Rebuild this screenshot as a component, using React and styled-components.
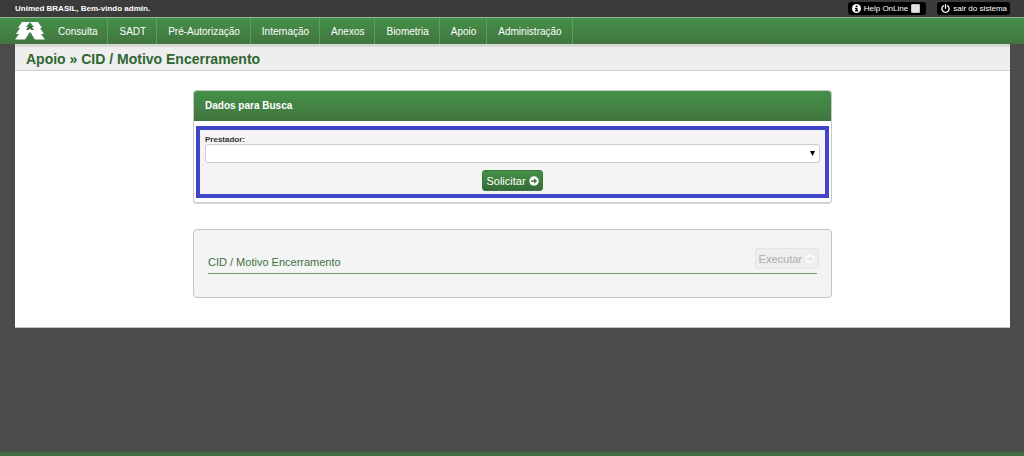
import React, { useState } from 'react'
import styled, { createGlobalStyle } from 'styled-components'


const GlobalStyle = createGlobalStyle`
        * {
            box-sizing: border-box;
        }

        body {
            margin: 0;
            background-color: #4b4b4b;
            font-family: Arial, 'Liberation Sans', sans-serif;
        }

        button, select, input {
            font-family: inherit;
            margin: 0;
        }
    `

const Layout = styled.div`
        display: flex;
        flex-direction: column;
        min-height: 100vh;
    `

const TopBar = styled.header`
        display: flex;
        align-items: center;
        justify-content: space-between;
        height: 17px;
        padding: 0 14px 0 15px;
        background-color: #3b3b3b;
        color: white;
        font-size: 8px;
    `

const Actions = styled.div`
        display: flex;
        gap: 11px;
    `

const Pill = styled.span`
        display: flex;
        align-items: center;
        gap: 3px;
        height: 13px;
        padding: 0 ${props => props.$end} 0 4px;
        border: 0;
        border-radius: 3px;
        background-color: black;
        color: white;
        font-size: 8px;
        line-height: 13px;
        text-decoration: none;
        cursor: pointer;
    `

const CheckBox = styled.input`
        appearance: none;
        width: 9px;
        height: 9px;
        border: 1px solid #c4c4c4;
        border-radius: 1px;
        background-color: ${props => props.checked ? '#3f8143' : '#e2e2e2'};
    `

const Nav = styled.nav`
        display: flex;
        height: 27px;
        padding-left: 15px;
        border-top: 1px solid #93b995;
        background: linear-gradient(#459049, #41753f);
    `

const Home = styled.a`
        display: flex;
        align-items: center;
        width: 32px;
    `

const NavList = styled.ul`
        display: flex;
        margin: 0;
        padding: 0;
        list-style-type: none;
    `

const NavItem = styled.li`
        display: flex;
        border-right: 1px solid #5f9a61;

        a {
            padding: 2px 10px 0 11px;
            color: white;
            font-size: 10px;
            line-height: 24px;
            text-decoration: none;
        }
    `

const Page = styled.main`
        margin: 0 14px 0 15px;
        padding-bottom: 29px;
        border-bottom: 1px solid #c4c4c4;
        background-color: white;
    `

const Title = styled.h1`
        height: 27px;
        margin: 0 0 19px;
        padding-left: 11px;
        border-top: 3px solid #d6d6d6;
        border-bottom: 1px solid #cfcfcf;
        background-color: #eeeeee;
        color: #2f6632;
        font-size: 14px;
        line-height: 24px;
    `

const Card = styled.section`
        max-width: 639px;
        margin: 0 auto;
        border: 1px solid #c8c8c8;
        border-bottom: 2px solid #d0d0cc;
        border-radius: 4px;
        overflow: hidden;
    `

const CardTitle = styled.h2`
        margin: 0;
        padding-left: 11px;
        background: linear-gradient(#459049, #41753f);
        color: white;
        font-size: 10px;
        line-height: 30px;
    `

const SearchForm = styled.form`
        margin: 5px 2px 4px;
        padding: 5px 5px 3px;
        border: 4px solid #4146c9;
        background-color: #f4f4f4;
        text-align: center;
    `

const Label = styled.label`
        display: block;
        color: #333333;
        font-size: 8px;
        font-weight: bold;
        line-height: 9px;
        text-align: left;
    `

const SelectBox = styled.div`
        position: relative;
        margin-bottom: 7px;

        svg {
            position: absolute;
            top: 7px;
            right: 5px;
            pointer-events: none;
        }
    `

const Select = styled.select`
        appearance: none;
        display: block;
        width: 100%;
        height: 19px;
        padding: 0 14px 0 4px;
        border: 1px solid #cccccc;
        border-radius: 3px;
        background-color: white;
        font-size: 10px;
    `

const Button = styled.button`
        display: inline-flex;
        align-items: center;
        gap: 3px;
        height: 21px;
        padding: 0 3px;
        border: 1px solid #3a7a3d;
        border-radius: 3px;
        background: linear-gradient(#459049, #356b36);
        color: white;
        font-size: 11px;
        vertical-align: top;

        &:disabled {
            border-color: #e4e4e4;
            background: #eeeeee;
            color: #adadad;
        }
    `

const ReportCard = styled.section`
        display: flex;
        max-width: 639px;
        margin: 25px auto 0;
        padding: 18px 14px 23px;
        border: 1px solid #c4c4c4;
        border-radius: 4px;
        background-color: #f4f4f4;
    `

const Report = styled.div`
        display: flex;
        flex: 1;
        justify-content: space-between;
        padding-bottom: 4px;
        border-bottom: 1px solid #6ba06e;

        h3 {
            margin: 0;
            padding-top: 7px;
            color: #3f7042;
            font-size: 11px;
            font-weight: normal;
            line-height: 14px;
        }

        button {
            margin-right: -2px;
        }
    `

const Footer = styled.footer`
        height: 5px;
        margin-top: auto;
        border-top: 1px solid #47584a;
        background-color: #3f6a42;
    `

const Logo = () => (
    <svg width='30' height='18' viewBox='0 0 30 18' aria-hidden='true'>
        <path d='M7 0h16l4 6h-2l4 6h-3l4 5.500h-10L15 10l-5 7.500H0L4 12H1l4-6H3z' fill='white' />
        <path d='M15 0l4 5h-2l2 3h-8l2-3h-2z' fill='#438847' />
        <path d='M15 3l3 4.500h-6z' fill='#2f6332' />
        <path d='M15 6l3 5h-6z' fill='white' />
        <path d='M15 10l2 3h-4z' fill='#3f7c42' />
    </svg>
)

const InfoIcon = () => (
    <svg width='9' height='9' viewBox='0 0 18 18' aria-hidden='true'>
        <circle cx='9' cy='9' r='9' fill='white' />
        <path d='M7.500 3h3.500v3H7.500zM6 7.500h5v5h1.500v2.500H6v-2.500h1.500V10H6z' fill='black' />
    </svg>
)

const PowerIcon = () => (
    <svg width='9' height='9' viewBox='0 0 18 18' fill='none' stroke='white' strokeWidth='2.600' strokeLinecap='round' aria-hidden='true'>
        <path d='M5 3.500a7.200 7.200 0 1 0 8 0M9 1.500v7' />
    </svg>
)

const ArrowIcon = ({ color, arrow }) => (
    <svg width='10' height='10' viewBox='0 0 20 20' aria-hidden='true'>
        <circle cx='10' cy='10' r='9.500' fill={color} />
        <path d='M4 8.500h6V4.500l6.500 5.500L10 15.500v-4H4z' fill={arrow} />
    </svg>
)

const menu = ['Consulta', 'SADT', 'Pré-Autorização', 'Internação', 'Anexos', 'Biometria', 'Apoio', 'Administração']

const App = () => {
    const [help, setHelp] = useState(false)

    return (
        <Layout>
            <GlobalStyle />
            <TopBar>
                <strong>Unimed BRASIL, Bem-vindo admin.</strong>
                <Actions>
                    <Pill as='label' $end='6px'>
                        <InfoIcon />
                        Help OnLine
                        <CheckBox type='checkbox' checked={help} onChange={() => setHelp(!help)} />
                    </Pill>
                    <Pill as='a' href='#sair' $end='3px'>
                        <PowerIcon />
                        sair do sistema
                    </Pill>
                </Actions>
            </TopBar>
            <Nav>
                <Home href='#inicio'><Logo /></Home>
                <NavList>
                    {
                        menu.map(item => (
                            <NavItem key={item}>
                                <a href='#menu'>{item}</a>
                            </NavItem>
                        ))
                    }
                </NavList>
            </Nav>
            <Page>
                <Title>Apoio » CID / Motivo Encerramento</Title>
                <Card>
                    <CardTitle>Dados para Busca</CardTitle>
                    <SearchForm onSubmit={e => e.preventDefault()}>
                        <Label htmlFor='prestador'>Prestador:</Label>
                        <SelectBox>
                            <Select id='prestador'>
                                <option value=''></option>
                            </Select>
                            <svg width='5' height='5' viewBox='0 0 5 5' aria-hidden='true'>
                                <path d='M0 0h5L2.500 5z' />
                            </svg>
                        </SelectBox>
                        <Button type='submit'>
                            Solicitar
                            <ArrowIcon color='white' arrow='#3c7a3e' />
                        </Button>
                    </SearchForm>
                </Card>
                <ReportCard>
                    <Report>
                        <h3>CID / Motivo Encerramento</h3>
                        <Button type='button' disabled>
                            Executar
                            <ArrowIcon color='#fafafa' arrow='#e4e4e4' />
                        </Button>
                    </Report>
                </ReportCard>
            </Page>
            <Footer />
        </Layout>
    )
}

export default App
